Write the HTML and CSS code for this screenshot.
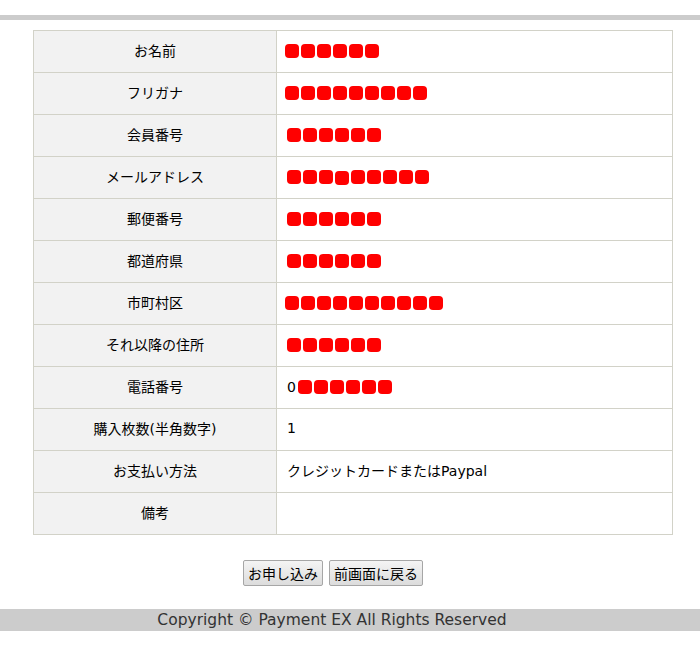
FILE: index.html
```html
<!DOCTYPE html>
<html lang="ja">
<head>
    <meta charset="UTF-8">
    <title>お申し込み内容の確認</title>
    <link rel="stylesheet" href="styles.css">
</head>
<body>
    <div class="top-bar"></div>
    <main class="content">
        <table class="confirm-table">
            <tr>
                <th>お名前</th>
                <td class="masked"><span class="mask"></span><span class="mask"></span><span class="mask"></span><span class="mask"></span><span class="mask"></span><span class="mask"></span></td>
            </tr>
            <tr>
                <th>フリガナ</th>
                <td class="masked"><span class="mask"></span><span class="mask"></span><span class="mask"></span><span class="mask"></span><span class="mask"></span><span class="mask"></span><span class="mask"></span><span class="mask"></span><span class="mask"></span></td>
            </tr>
            <tr>
                <th>会員番号</th>
                <td class="masked shift"><span class="mask"></span><span class="mask"></span><span class="mask"></span><span class="mask"></span><span class="mask"></span><span class="mask"></span></td>
            </tr>
            <tr>
                <th>メールアドレス</th>
                <td class="masked shift"><span class="mask"></span><span class="mask"></span><span class="mask"></span><span class="mask low"></span><span class="mask"></span><span class="mask"></span><span class="mask"></span><span class="mask"></span><span class="mask"></span></td>
            </tr>
            <tr>
                <th>郵便番号</th>
                <td class="masked shift"><span class="mask"></span><span class="mask"></span><span class="mask"></span><span class="mask"></span><span class="mask"></span><span class="mask"></span></td>
            </tr>
            <tr>
                <th>都道府県</th>
                <td class="masked shift"><span class="mask"></span><span class="mask"></span><span class="mask"></span><span class="mask"></span><span class="mask"></span><span class="mask"></span></td>
            </tr>
            <tr>
                <th>市町村区</th>
                <td class="masked"><span class="mask"></span><span class="mask"></span><span class="mask"></span><span class="mask"></span><span class="mask"></span><span class="mask"></span><span class="mask"></span><span class="mask"></span><span class="mask"></span><span class="mask"></span></td>
            </tr>
            <tr>
                <th>それ以降の住所</th>
                <td class="masked shift"><span class="mask"></span><span class="mask"></span><span class="mask"></span><span class="mask"></span><span class="mask"></span><span class="mask"></span></td>
            </tr>
            <tr>
                <th>電話番号</th>
                <td><span class="lead">0</span><span class="mask"></span><span class="mask"></span><span class="mask"></span><span class="mask"></span><span class="mask"></span><span class="mask"></span></td>
            </tr>
            <tr>
                <th>購入枚数(半角数字)</th>
                <td>1</td>
            </tr>
            <tr>
                <th>お支払い方法</th>
                <td>クレジットカードまたはPaypal</td>
            </tr>
            <tr>
                <th>備考</th>
                <td></td>
            </tr>
        </table>

        <div class="actions">
            <button type="button" class="btn">お申し込み</button>
            <button type="button" class="btn">前画面に戻る</button>
        </div>
    </main>
    <footer class="footer">
        Copyright &copy; Payment EX All Rights Reserved
    </footer>
</body>
</html>
```

FILE: styles.css
```css
body {
    font-family: Tahoma, "DejaVu Sans", "Noto Sans CJK JP", sans-serif;
    font-size: 14px;
    color: #000;
    background-color: #fff;
    margin: 0;
    padding: 15px 0 0;
}
.top-bar {
    height: 5px;
    background-color: #cccccc;
}
.content {
    padding: 10px 0 0 33px;
}
.confirm-table {
    width: 640px;
    border-collapse: collapse;
    border: 1px solid #d2d2c8;
}
.confirm-table th,
.confirm-table td {
    height: 38px;
    padding: 0 0 3px;
    border: 1px solid #d2d2c8;
    font-weight: normal;
}
.confirm-table th {
    width: 242px;
    background-color: #f2f2f2;
    text-align: center;
}
.confirm-table td {
    padding-left: 10px;
    text-align: left;
}
.confirm-table td.masked {
    padding-left: 8px;
}
.confirm-table td.shift {
    padding-left: 10px;
}
.mask {
    display: inline-block;
    width: 14px;
    height: 14px;
    margin-right: 2px;
    background-color: #ff0000;
    border-radius: 4px;
    vertical-align: middle;
}
.mask.low {
    position: relative;
    top: 1px;
}
.lead {
    display: inline-block;
    width: 11px;
    vertical-align: middle;
}
.actions {
    display: flex;
    justify-content: center;
    gap: 6px;
    padding: 25px 67px 0 0;
}
.btn {
    font-family: inherit;
    font-size: 14px;
    height: 26px;
    padding: 0 4px;
    color: #000;
    background: linear-gradient(#f4f4f4, #dcdcdc);
    border: 1px solid #a6a6a6;
    border-radius: 2px;
}
.footer {
    margin-top: 23px;
    background-color: #cccccc;
    height: 22px;
    line-height: 22px;
    padding-right: 36px;
    text-align: center;
    font-size: 15.5px;
    color: #333;
}
```
